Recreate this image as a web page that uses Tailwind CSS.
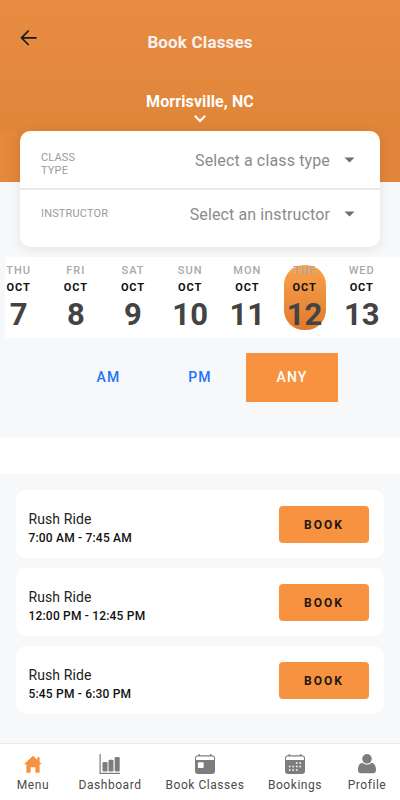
<!DOCTYPE html>
<html lang="en">
<head>
<meta charset="utf-8">
<meta name="viewport" content="width=device-width, initial-scale=1">
<title>Book Classes</title>
<script src="https://cdn.jsdelivr.net/npm/@tailwindcss/browser@4"></script>
</head>
<body class="w-[400px] h-[800px] overflow-hidden bg-[#f7f8fa] font-[Roboto,sans-serif] flex flex-col">
<header class="h-[131px] shrink-0 bg-linear-to-b from-[#e78c42] to-[#e08639] text-white font-bold grid grid-cols-[58px_1fr_58px]">
  <button class="flex pt-[29px] pl-[20px] h-[48px]" aria-label="Back">
    <svg class="w-[18px] h-[18px]" viewBox="0 0 18 18" fill="none" stroke="#17171f" stroke-width="1.7"><path d="M16.600 8.800H1.800M8.700 1.500L1.500 8.800l7.200 7.200"/></svg>
  </button>
  <div class="flex flex-col items-center">
    <h1 class="mt-[32px] text-[17px] leading-[20px] tracking-[0.15px] text-[#f7f1f3]">Book Classes</h1>
    <p class="mt-[40px] text-[16px] leading-[20px] tracking-[0.1px] whitespace-nowrap">Morrisville, NC</p>
    <svg class="w-[12px] h-[8px] mt-[3px]" viewBox="0 0 12 8" fill="none" stroke="#fff" stroke-width="2"><path d="M.8 .8L6 6l5.200-5.200"/></svg>
  </div>
</header>
<section class="h-[126px] shrink-0 px-[20px] bg-[linear-gradient(to_right,#e68b3d,#e0853a_20px,#e0853a)] bg-[length:100%_51px] bg-no-repeat">
  <div class="h-[116px] rounded-[10px] bg-white shadow-[0_2px_12px_rgba(0,0,0,0.09)]">
    <div class="h-[59px] flex border-b-2 border-[#e9e9eb] pl-[21px] pr-[25px]">
      <span class="w-[60px] pt-[20px] text-[11px] leading-[13px] tracking-[0.15px] text-[#9b9b9b]">CLASS<br>TYPE</span>
      <span class="ml-auto pt-[20px] text-[16px] leading-[20px] tracking-[0.14px] text-[#8b8b8b]">Select a class type</span>
      <svg class="w-[11px] h-[6px] ml-[14px] mt-[26px]" viewBox="0 0 11 6" fill="#6e6e6e"><path d="M.5 .5h10l-5 5z"/></svg>
    </div>
    <div class="h-[57px] flex pl-[21px] pr-[25px]">
      <span class="pt-[17px] text-[11px] leading-[13px] tracking-[0.15px] text-[#9b9b9b]">INSTRUCTOR</span>
      <span class="ml-auto pt-[15px] text-[16px] leading-[20px] tracking-[0.12px] text-[#8b8b8b]">Select an instructor</span>
      <svg class="w-[11px] h-[6px] ml-[14px] mt-[21px]" viewBox="0 0 11 6" fill="#6e6e6e"><path d="M.5 .5h10l-5 5z"/></svg>
    </div>
  </div>
</section>
<section class="ml-[5px] h-[81px] shrink-0 bg-white flex">
  <div id="days" class="flex -ml-[15px] pt-[8px]"></div>
</section>
<section class="h-[99px] shrink-0 pt-[15px] pl-[63px] pr-[62px] flex text-[14px] tracking-[1.2px]">
  <button class="w-[91px] h-[49px] font-medium text-[#2372fa]">AM</button>
  <button class="w-[92px] h-[49px] font-medium text-[#2372fa]">PM</button>
  <button class="w-[92px] h-[49px] font-medium bg-[#f79240] text-white">ANY</button>
</section>
<div class="h-[37px] shrink-0 bg-white"></div>
<main id="classes" class="flex-1 px-[16px] pt-[16px] flex flex-col gap-[10px]"></main>
<nav class="h-[57px] shrink-0 bg-white border-t border-[#eaebee] flex text-[12px] leading-[14px] tracking-[0.55px] text-[#4a4a4a] text-center whitespace-nowrap">
  <a class="w-[66px] pt-[10px] flex flex-col items-center gap-[4px]">
    <svg class="w-[18px] h-[20px]" viewBox="0 0 18 20" fill="#f79240"><path d="M9 1.800L0 10.200h2.400v8.600h4.200v-5.500h4.800v5.500h4.200v-8.600H18l-2.400-2.300V3.300h-2.300v2.500z"/></svg>
    <span>Menu</span>
  </a>
  <a class="w-[88px] pt-[10px] flex flex-col items-center gap-[4px]">
    <svg class="w-[22px] h-[20px]" viewBox="0 0 22 20" fill="#7d7d7d"><path d="M.5 0h1.200v18.800H21V20H.5z"/><rect x="3.500" y="8" width="5" height="9.500" rx="1.300"/><rect x="9.500" y="5.800" width="5" height="11.700" rx="1.300"/><rect x="15.700" y="3" width="5" height="14.500" rx="1.300"/></svg>
    <span>Dashboard</span>
  </a>
  <a class="w-[102px] pt-[10px] flex flex-col items-center gap-[4px]">
    <svg class="w-[20px] h-[20px]" viewBox="0 0 20 20" fill="#7d7d7d"><path d="M3.600 0h1.300v1.200h10.200V0h1.300v1.200A3 3 0 0 1 20 4v3h-1V4.200c0-1.200-.6-1.800-1.800-1.800H2.800C1.600 2.400 1 3 1 4.200V7H0V4a3 3 0 0 1 3.600-2.800z"/><path fill-rule="evenodd" d="M0 6h20v11a3 3 0 0 1-3 3H3a3 3 0 0 1-3-3zM3.700 8.200a.8.800 0 0 0-.8.800v4.200c0 .5.300.8.800.8h4.200c.5 0 .8-.3.800-.8V9c0-.5-.3-.8-.8-.8z"/></svg>
    <span>Book Classes</span>
  </a>
  <a class="w-[78px] pt-[10px] flex flex-col items-center gap-[4px]">
    <svg class="w-[20px] h-[20px]" viewBox="0 0 20 20" fill="#7d7d7d"><path d="M3.600 0h1.300v1.200h10.200V0h1.300v1.200A3 3 0 0 1 20 4v3h-1V4.200c0-1.200-.6-1.800-1.800-1.800H2.800C1.600 2.400 1 3 1 4.200V7H0V4a3 3 0 0 1 3.600-2.800z"/><path d="M0 6h20v11a3 3 0 0 1-3 3H3a3 3 0 0 1-3-3z"/><path stroke="#fff" stroke-width="1.500" stroke-dasharray="1.600 1.900" d="M10.900 9h5.400M3.900 12.500h12.400M3.900 16h9"/></svg>
    <span>Bookings</span>
  </a>
  <a class="w-[66px] pt-[10px] flex flex-col items-center gap-[4px]">
    <svg class="w-[18px] h-[20px]" viewBox="0 0 18 20" fill="#7d7d7d"><circle cx="9" cy="4.800" r="4.800"/><path d="M4.300 8.700C2 9 0 11.800 0 15.500c0 2.500.8 3.700 2.700 3.700h12.600c1.900 0 2.700-1.200 2.700-3.700 0-3.700-2-6.500-4.300-6.800-1.300 1.200-2.800 1.800-4.700 1.800s-3.400-.6-4.700-1.800z"/></svg>
    <span>Profile</span>
  </a>
</nav>
<script>
const days = [['THU', 7], ['FRI', 8], ['SAT', 9], ['SUN', 10], ['MON', 11], ['TUE', 12], ['WED', 13]];
document.getElementById('days').innerHTML = days.map(([d, n]) => `
  <div class="w-[57.2px] shrink-0 flex justify-center">
    <div class="w-[42px] h-[65px] shrink-0 rounded-[20px] flex flex-col items-center ${n === 12 ? 'bg-linear-to-b from-[#faa34e] to-[#df7a2b]' : ''}">
      <span class="text-[11px] leading-[12px] font-medium tracking-[1px] text-[#a9a9a9]">${d}</span>
      <span class="mt-[5px] text-[11px] leading-[12px] font-bold tracking-[0.9px] text-[#111]">OCT</span>
      <span class="mt-[5px] text-[31px] leading-[32px] font-bold text-[#434343]">${n}</span>
    </div>
  </div>`).join('');
const times = ['7:00 AM - 7:45 AM', '12:00 PM - 12:45 PM', '5:45 PM - 6:30 PM'];
document.getElementById('classes').innerHTML = times.map(t => `
  <article class="h-[68px] shrink-0 rounded-[10px] bg-white pl-[12.5px] pr-[15px] flex justify-between">
    <div class="pt-[20px]">
      <h2 class="text-[14px] leading-[18px] tracking-[0.1px] text-[#222]">Rush Ride</h2>
      <p class="mt-[2px] text-[12px] leading-[16px] font-medium tracking-[0.19px] text-[#111]">${t}</p>
    </div>
    <button class="mt-[16px] w-[90px] h-[37px] rounded-[4px] bg-[#f79240] text-[12px] font-bold tracking-[2px] text-[#1b1714]">BOOK</button>
  </article>`).join('');
</script>
</body>
</html>
